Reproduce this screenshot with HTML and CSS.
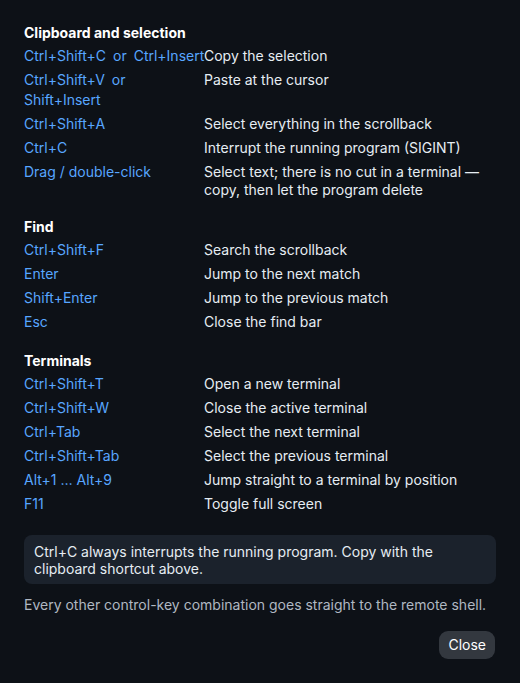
FILE: index.html
```html
<!DOCTYPE html>
<html lang="en">
<head>
<meta charset="utf-8">
<title>Keyboard shortcuts</title>
<link rel="stylesheet" href="styles.css">
</head>
<body>
<div class="dialog">
  <section class="section">
    <h3 class="section-title">Clipboard and selection</h3>
    <div class="rows">
      <div class="key key-nowrap">Ctrl+Shift+C <span class="or">or</span> Ctrl+Insert</div><div class="desc">Copy the selection</div>
      <div class="key">Ctrl+Shift+V <span class="or">or</span> Shift+Insert</div><div class="desc">Paste at the cursor</div>
      <div class="key">Ctrl+Shift+A</div><div class="desc">Select everything in the scrollback</div>
      <div class="key">Ctrl+C</div><div class="desc">Interrupt the running program (SIGINT)</div>
      <div class="key">Drag / double-click</div><div class="desc">Select text; there is no cut in a terminal — copy, then let the program delete</div>
    </div>
  </section>
  <section class="section">
    <h3 class="section-title">Find</h3>
    <div class="rows">
      <div class="key">Ctrl+Shift+F</div><div class="desc">Search the scrollback</div>
      <div class="key">Enter</div><div class="desc">Jump to the next match</div>
      <div class="key">Shift+Enter</div><div class="desc">Jump to the previous match</div>
      <div class="key">Esc</div><div class="desc">Close the find bar</div>
    </div>
  </section>
  <section class="section">
    <h3 class="section-title">Terminals</h3>
    <div class="rows">
      <div class="key">Ctrl+Shift+T</div><div class="desc">Open a new terminal</div>
      <div class="key">Ctrl+Shift+W</div><div class="desc">Close the active terminal</div>
      <div class="key">Ctrl+Tab</div><div class="desc">Select the next terminal</div>
      <div class="key">Ctrl+Shift+Tab</div><div class="desc">Select the previous terminal</div>
      <div class="key">Alt+1 … Alt+9</div><div class="desc">Jump straight to a terminal by position</div>
      <div class="key">F11</div><div class="desc">Toggle full screen</div>
    </div>
  </section>
  <p class="note">Ctrl+C always interrupts the running program. Copy with the clipboard shortcut above.</p>
  <p class="footer">Every other control-key combination goes straight to the remote shell.</p>
  <div class="actions"><button class="btn" type="button">Close</button></div>
</div>
</body>
</html>
```
FILE: styles.css
```css
html, body {
  margin: 0;
  background: #0d1117;
}
body {
  font-family: Inter, "Noto Sans", sans-serif;
  font-size: 14px;
  color: #e6edf3;
}
.dialog {
  padding: 23px 24px 24px 24px;
}
.section + .section {
  margin-top: 19px;
}
.section-title {
  margin: 0 0 3px 0;
  font-size: 14px;
  line-height: 20px;
  font-weight: 700;
  color: #ffffff;
}
.rows {
  display: grid;
  grid-template-columns: 180px 1fr;
  row-gap: 4px;
}
.key {
  color: #58a6ff;
  line-height: 20px;
}
.key-nowrap {
  white-space: nowrap;
}
.or {
  margin: 0 3px;
}
.desc {
  line-height: 17.5px;
  padding-top: 1px;
}
.note {
  margin: 21px 0 0 0;
  padding: 8px 10px 7px 10px;
  background: #1b222c;
  border-radius: 8px;
  line-height: 17px;
}
.footer {
  margin: 12px 0 0 0;
  line-height: 17.5px;
  color: #b0b8c2;
}
.actions {
  display: flex;
  justify-content: flex-end;
  margin-top: 17px;
  padding-right: 1px;
}
.btn {
  font-family: inherit;
  font-size: 14px;
  line-height: 18px;
  color: #ffffff;
  background: #33383f;
  border: none;
  border-radius: 9px;
  padding: 5px 9px;
}
```
